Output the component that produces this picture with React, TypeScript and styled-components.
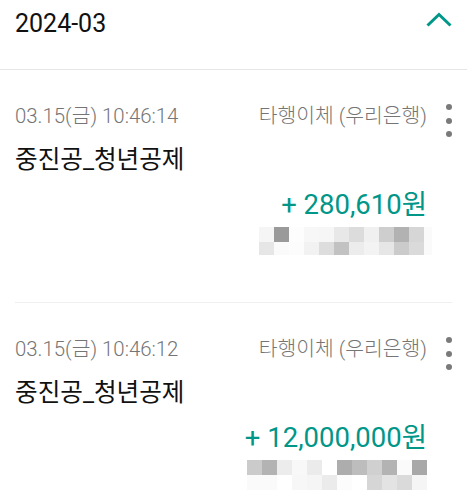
import React from "react";
import styled, { createGlobalStyle } from "styled-components";

const GlobalStyle = createGlobalStyle`
  html, body {
    margin: 0;
    padding: 0;
    background: #ffffff;
  }
  body {
    font-family: Roboto, "Noto Sans CJK KR", "Noto Sans", sans-serif;
    -webkit-font-smoothing: antialiased;
  }
`;

const TEAL = "#009688";

const Page = styled.div`
  width: 467px;
  background: #ffffff;
`;

const Header = styled.header`
  box-sizing: border-box;
  height: 70px;
  display: flex;
  justify-content: space-between;
  align-items: flex-start;
  padding: 9px 15px 0;
  border-bottom: 1px solid #e6e6e6;
`;

const MonthTitle = styled.h2`
  margin: 0;
  font-size: 25px;
  line-height: 30px;
  font-weight: 400;
  color: #111111;
`;

const Chevron = styled.svg`
  margin-top: 3px;
  display: block;
`;

const Item = styled.section`
  margin: 0 15px;
  padding: 32px 0 47px;
  display: flex;
  gap: 19px;
  border-bottom: 1px solid #efefef;
  &:last-child {
    border-bottom: none;
    padding-bottom: 8px;
  }
`;

const Content = styled.div`
  flex: 1;
  min-width: 0;
  display: flex;
  flex-direction: column;
`;

const MetaRow = styled.div`
  display: flex;
  justify-content: space-between;
  font-size: 20.4px;
  line-height: 28px;
  font-weight: 300;
  color: #757575;
  white-space: nowrap;
`;

const Name = styled.div`
  margin-top: 14px;
  font-size: 24.6px;
  line-height: 32px;
  font-weight: 400;
  color: #111111;
`;

const Amount = styled.div`
  margin-top: 12px;
  font-size: 27.5px;
  line-height: 34px;
  font-weight: 400;
  color: ${TEAL};
  text-align: right;
`;

const MosaicWrap = styled.div<{ $shift: number }>`
  margin-top: 5px;
  display: flex;
  justify-content: flex-end;
  margin-right: ${(p) => -p.$shift}px;
`;

const MosaicGrid = styled.div<{ $cols: string; $rows: string }>`
  display: grid;
  grid-template-columns: ${(p) => p.$cols};
  grid-template-rows: ${(p) => p.$rows};
`;

const Cell = styled.div<{ $c: string }>`
  background: ${(p) => p.$c};
`;

const More = styled.div`
  width: 6px;
  display: flex;
  flex-direction: column;
  gap: 7.5px;
  padding-top: 2px;
`;

const Dot = styled.span`
  display: block;
  width: 6px;
  height: 6px;
  border-radius: 50%;
  background: #7a7a7a;
`;

type Tx = {
  date: string;
  kind: string;
  name: string;
  amount: string;
  cols: string;
  rows: string;
  shift: number;
  cells: string[];
};

const txs: Tx[] = [
  {
    date: "03.15(금) 10:46:14",
    kind: "타행이체 (우리은행)",
    name: "중진공_청년공제",
    amount: "+ 280,610원",
    cols: "repeat(11, 15px) 8px",
    rows: "15px 13px",
    shift: 5,
    cells: [
      "#f5f5f5", "#9a9a9a", "#fdfdfd", "#f7f7f7", "#f6f6f6", "#e8e8e8",
      "#dcdcdc", "#f0f0f0", "#cecece", "#b2b2b2", "#d6d6d6", "#fafafa",
      "#e6e6e6", "#fafafa", "#fcfcfc", "#f2f2f2", "#dddddd", "#c2c2c2",
      "#ececec", "#f3f3f3", "#e6e6e6", "#cbcbcb", "#dadada", "#fafafa",
    ],
  },
  {
    date: "03.15(금) 10:46:12",
    kind: "타행이체 (우리은행)",
    name: "중진공_청년공제",
    amount: "+ 12,000,000원",
    cols: "repeat(12, 15px)",
    rows: "15px 15px",
    shift: 0,
    cells: [
      "#cbcbcb", "#b3b3b3", "#ececec", "#f8f8f8", "#ebebeb", "#ffffff",
      "#adadad", "#bdbdbd", "#d0d0d0", "#b3b3b3", "#fafafa", "#a8a8a8",
      "#fafafa", "#fafafa", "#ffffff", "#f7f7f7", "#f5f5f5", "#ebebeb",
      "#fcfcfc", "#ffffff", "#d6d6d6", "#e3e3e3", "#dadada", "#f5f5f5",
    ],
  },
];

export default function App() {
  return (
    <Page>
      <GlobalStyle />
      <Header>
        <MonthTitle>2024-03</MonthTitle>
        <Chevron width="26" height="16" viewBox="0 0 26 16" aria-hidden="true">
          <polyline
            points="1.5,13.5 13,2.5 24.5,13.5"
            fill="none"
            stroke={TEAL}
            strokeWidth="3"
          />
        </Chevron>
      </Header>
      {txs.map((t, i) => (
        <Item key={i}>
          <Content>
            <MetaRow>
              <span>{t.date}</span>
              <span>{t.kind}</span>
            </MetaRow>
            <Name>{t.name}</Name>
            <Amount>{t.amount}</Amount>
            <MosaicWrap $shift={t.shift}>
              <MosaicGrid $cols={t.cols} $rows={t.rows}>
                {t.cells.map((c, j) => (
                  <Cell key={j} $c={c} />
                ))}
              </MosaicGrid>
            </MosaicWrap>
          </Content>
          <More>
            <Dot />
            <Dot />
            <Dot />
          </More>
        </Item>
      ))}
    </Page>
  );
}
